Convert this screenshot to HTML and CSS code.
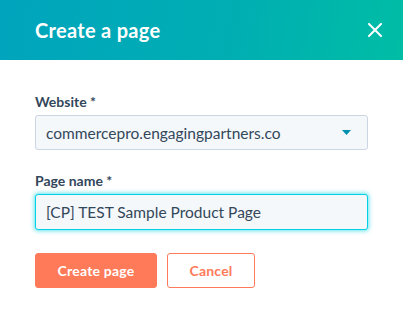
FILE: index.html
```html
<!DOCTYPE html>
<html lang="en">
<head>
    <meta charset="UTF-8">
    <title>Create a page</title>
    <link rel="stylesheet" href="styles.css">
</head>
<body>
    <div class="dialog">
        <div class="dialog-header">
            <h1>Create a page</h1>
            <button class="close" aria-label="Close">
                <svg width="14" height="14" viewBox="0 0 14 14">
                    <path d="M1 1L13 13M13 1L1 13" stroke="#fff" stroke-width="2" stroke-linecap="round"/>
                </svg>
            </button>
        </div>
        <div class="dialog-body">
            <div class="form-group">
                <label>Website *</label>
                <div class="select">
                    <span>commercepro.engagingpartners.co</span>
                    <svg class="caret" width="9" height="5" viewBox="0 0 9 5">
                        <path d="M0 0H9L4.5 5Z" fill="#0091ae"/>
                    </svg>
                </div>
            </div>
            <div class="form-group">
                <label>Page name *</label>
                <div class="input focused">[CP] TEST Sample Product Page</div>
            </div>
            <div class="actions">
                <button class="btn primary">Create page</button>
                <button class="btn secondary">Cancel</button>
            </div>
        </div>
    </div>
</body>
</html>
```

FILE: styles.css
```css
* {
    margin: 0;
    padding: 0;
    box-sizing: border-box;
    font-family: 'Lato', sans-serif;
}

body {
    background: #fff;
    color: #33475b;
}

.dialog {
    width: 403px;
    height: 309px;
    background: #fff;
}

.dialog-header {
    height: 60px;
    display: flex;
    align-items: center;
    justify-content: space-between;
    padding: 0 21px 0 35px;
    background: linear-gradient(100deg, #00a4bd 0%, #00afb2 60%, #00bda5 100%);
}

.dialog-header h1 {
    color: #fff;
    font-size: 20px;
    font-weight: 700;
    letter-spacing: 0.3px;
}

.close {
    background: none;
    border: none;
    width: 14px;
    height: 14px;
    display: flex;
    cursor: pointer;
}

.dialog-body {
    padding: 32px 35px 0;
}

.form-group {
    margin-bottom: 21px;
}

label {
    display: block;
    font-size: 14px;
    font-weight: 700;
    line-height: 20px;
    margin-bottom: 3px;
}

.select,
.input {
    height: 35px;
    display: flex;
    align-items: center;
    padding: 0 10px;
    font-size: 15.5px;
    background: #f5f8fa;
    border: 1px solid #cbd6e2;
    border-radius: 3px;
}

.select {
    justify-content: space-between;
    padding-right: 16px;
}

.input.focused {
    height: 36px;
    border-color: #00d0e4;
    box-shadow: 0 0 4px 1px rgba(0, 208, 228, 0.6);
}

.form-group:nth-child(2) {
    margin-bottom: 23px;
}

.actions {
    display: flex;
    gap: 10px;
}

.btn {
    height: 35px;
    border-radius: 3px;
    font-size: 14px;
    font-weight: 700;
    letter-spacing: 0.2px;
    cursor: pointer;
}

.btn.primary {
    width: 122px;
    background: #ff7a59;
    border: 1px solid #ff7a59;
    color: #fff;
}

.btn.secondary {
    width: 88px;
    background: #fff;
    border: 1px solid #ff7a59;
    color: #ff7a59;
}
```
